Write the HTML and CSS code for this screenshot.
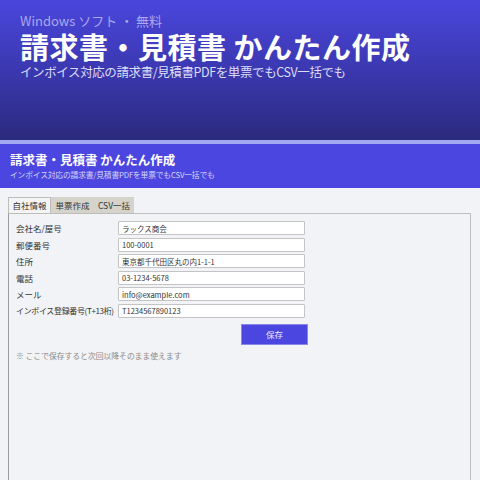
FILE: index.html
```html
<!DOCTYPE html>
<html lang="ja">
<head>
<meta charset="UTF-8">
<meta name="viewport" content="width=device-width, initial-scale=1.0">
<title>請求書・見積書 かんたん作成</title>
<link rel="stylesheet" href="styles.css">
</head>
<body>
  <div class="hero">
    <div class="hero-tag">Windows ソフト ・ 無料</div>
    <h1 class="hero-title">請求書・見積書 かんたん作成</h1>
    <div class="hero-sub">インボイス対応の請求書/見積書PDFを単票でもCSV一括でも</div>
  </div>
  <div class="hero-line"></div>

  <div class="app-bar">
    <div class="app-title">請求書・見積書 かんたん作成</div>
    <div class="app-sub">インボイス対応の請求書/見積書PDFを単票でもCSV一括でも</div>
  </div>

  <div class="app-body">
    <div class="tabs">
      <div class="tab active">自社情報</div>
      <div class="tab">単票作成</div>
      <div class="tab">CSV一括</div>
    </div>
    <div class="tab-panel">
      <div class="form-grid">
        <label class="field-label">会社名/屋号</label>
        <input class="field-input" type="text" value="ラックス商会">
        <label class="field-label">郵便番号</label>
        <input class="field-input" type="text" value="100-0001">
        <label class="field-label">住所</label>
        <input class="field-input" type="text" value="東京都千代田区丸の内1-1-1">
        <label class="field-label">電話</label>
        <input class="field-input" type="text" value="03-1234-5678">
        <label class="field-label">メール</label>
        <input class="field-input" type="text" value="info@example.com">
        <label class="field-label narrow">インボイス登録番号(T+13桁)</label>
        <input class="field-input" type="text" value="T1234567890123">
      </div>
      <div class="form-actions">
        <button class="save-button">保存</button>
      </div>
      <p class="note">※ ここで保存すると次回以降そのまま使えます</p>
    </div>
  </div>
</body>
</html>
```

FILE: styles.css
```css
body {
    font-family: "Noto Sans CJK JP", "Noto Sans", sans-serif;
    margin: 0;
    padding: 0;
    background-color: #f2f3f6;
    height: 480px;
    overflow: hidden;
  }

  /* top banner */
  .hero {
    height: 140px;
    box-sizing: border-box;
    padding: 12px 20px 0;
    background: linear-gradient(to bottom, #4a46dd 0%, #3b38b0 50%, #2b2a7d 100%);
    color: #fff;
  }
  .hero-tag {
    font-size: 13px;
    line-height: 17px;
    color: #a9a8f0;
  }
  .hero-title {
    margin: 0;
    font-size: 29px;
    font-weight: bold;
    line-height: 34px;
    letter-spacing: 0.5px;
  }
  .hero-sub {
    font-size: 12.5px;
    line-height: 17px;
    color: #dcdcf6;
    letter-spacing: -0.4px;
  }
  .hero-line {
    height: 4px;
    background-color: #a3a9f1;
  }

  /* app title bar */
  .app-bar {
    height: 44px;
    box-sizing: border-box;
    padding: 7px 10px 0;
    background-color: #4b46df;
    color: #fff;
  }
  .app-title {
    font-size: 12.5px;
    font-weight: bold;
    line-height: 18px;
  }
  .app-sub {
    font-size: 7.8px;
    line-height: 12px;
    color: #d6d6f8;
    letter-spacing: -0.2px;
  }

  /* tabs */
  .app-body {
    padding: 9px 8px 0 8px;
  }
  .tabs {
    display: flex;
    height: 16px;
  }
  .tab {
    font-size: 8.5px;
    line-height: 16px;
    padding: 0;
    color: #333;
    background-color: #d6d3cb;
    width: 43px;
    box-sizing: border-box;
    text-align: center;
    white-space: nowrap;
  }
  .tab:last-child {
    width: 40px;
  }
  .tab.active {
    background-color: #f4f4f4;
    border: 1px solid #bdbdbd;
    border-bottom: none;
    line-height: 15px;
  }
  .tab-panel {
    border: 1px solid #bdbdbd;
    border-bottom: none;
    border-left-color: #9c9c9c;
    height: 267px;
    box-sizing: border-box;
    padding: 7px 7px 0;
    margin-right: 1px;
    overflow: hidden;
  }

  /* company form */
  .form-grid {
    display: grid;
    grid-template-columns: 102px 187px;
    row-gap: 2.6px;
    align-items: center;
  }
  .field-label {
    font-size: 8.5px;
    color: #333;
    line-height: 14px;
    white-space: nowrap;
  }
  .field-label.narrow {
    font-size: 8px;
    letter-spacing: -0.35px;
  }
  .field-input {
    height: 14px;
    box-sizing: border-box;
    border: 1px solid #c4c4c4;
    border-radius: 1px;
    background-color: #fff;
    padding: 0 3px;
    font-family: "Noto Sans CJK JP", "Noto Sans", sans-serif;
    font-size: 7.5px;
    color: #333;
  }
  .form-actions {
    width: 292px;
    display: flex;
    justify-content: flex-end;
    margin-top: 6px;
  }
  .save-button {
    width: 67px;
    height: 21px;
    background-color: #4b46df;
    color: #e8e8fb;
    border: 1px solid #8a87e6;
    font-family: "Noto Sans CJK JP", "Noto Sans", sans-serif;
    font-size: 8.5px;
    padding: 0;
    cursor: pointer;
  }
  .note {
    margin: 5px 0 0;
    font-size: 7.8px;
    line-height: 12px;
    color: #8a8a8a;
  }
```
